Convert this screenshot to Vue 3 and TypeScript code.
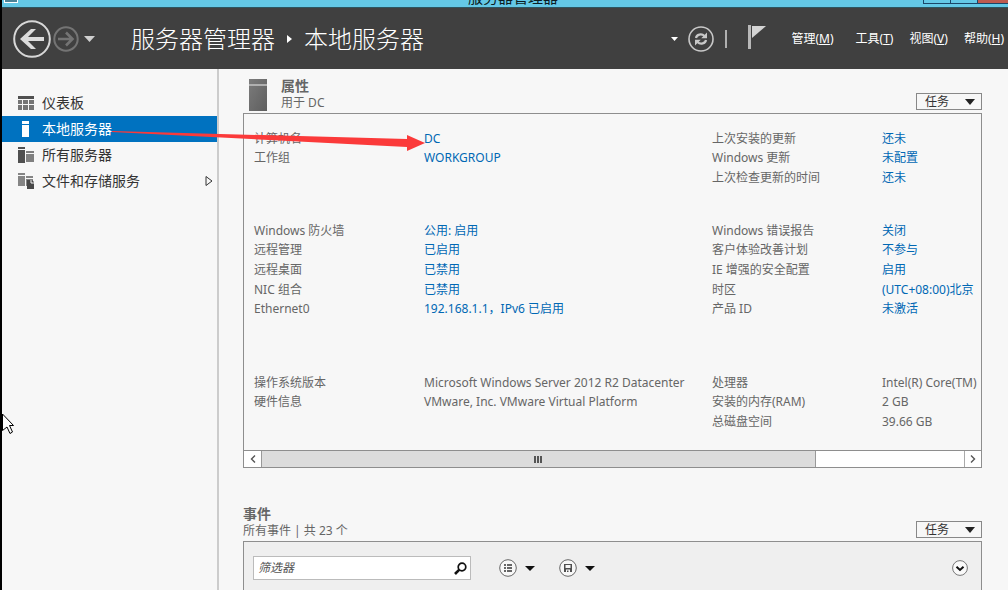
<script setup lang="ts">
import { ref } from 'vue'

interface Fact {
  label: string
  value: string
  link?: boolean
}

interface FactGroup {
  size: 'short' | 'tall'
  columns: Fact[][]
}

const navItems = [
  { id: 'dashboard', label: '仪表板' },
  { id: 'local', label: '本地服务器' },
  { id: 'all', label: '所有服务器' },
  { id: 'storage', label: '文件和存储服务' },
]

const menus = [
  { label: '管理', key: 'M' },
  { label: '工具', key: 'T' },
  { label: '视图', key: 'V' },
  { label: '帮助', key: 'H' },
]

const groups: FactGroup[] = [
  {
    size: 'short',
    columns: [
      [
        { label: '计算机名', value: 'DC', link: true },
        { label: '工作组', value: 'WORKGROUP', link: true },
      ],
      [
        { label: '上次安装的更新', value: '还未', link: true },
        { label: 'Windows 更新', value: '未配置', link: true },
        { label: '上次检查更新的时间', value: '还未', link: true },
      ],
    ],
  },
  {
    size: 'tall',
    columns: [
      [
        { label: 'Windows 防火墙', value: '公用: 启用', link: true },
        { label: '远程管理', value: '已启用', link: true },
        { label: '远程桌面', value: '已禁用', link: true },
        { label: 'NIC 组合', value: '已禁用', link: true },
        { label: 'Ethernet0', value: '192.168.1.1，IPv6 已启用', link: true },
      ],
      [
        { label: 'Windows 错误报告', value: '关闭', link: true },
        { label: '客户体验改善计划', value: '不参与', link: true },
        { label: 'IE 增强的安全配置', value: '启用', link: true },
        { label: '时区', value: '(UTC+08:00)北京', link: true },
        { label: '产品 ID', value: '未激活', link: true },
      ],
    ],
  },
  {
    size: 'short',
    columns: [
      [
        { label: '操作系统版本', value: 'Microsoft Windows Server 2012 R2 Datacenter' },
        { label: '硬件信息', value: 'VMware, Inc. VMware Virtual Platform' },
      ],
      [
        { label: '处理器', value: 'Intel(R) Core(TM)' },
        { label: '安装的内存(RAM)', value: '2 GB' },
        { label: '总磁盘空间', value: '39.66 GB' },
      ],
    ],
  },
]

const active = ref('local')
const filter = ref('')
</script>

<template>
  <div class="window">
    <div class="titlebar">
      <span class="app-icon"></span>
      <span class="window-title">服务器管理器</span>
      <div class="window-buttons">
        <button type="button" aria-label="最小化"></button>
        <button type="button" aria-label="最大化"></button>
        <button type="button" class="close" aria-label="关闭"></button>
      </div>
    </div>

    <header class="toolbar">
      <button type="button" class="bare" aria-label="后退">
        <svg width="38" height="38" viewBox="0 0 38 38">
          <circle cx="19" cy="19" r="17.8" fill="none" stroke="#d8d8d8" stroke-width="2" />
          <path d="M7 19 L18 9 H23 L15 17 H31 V21 H15 L23 29 H18 Z" fill="#dcdcdc" />
        </svg>
      </button>
      <button type="button" class="bare forward" aria-label="前进">
        <svg width="26" height="26" viewBox="0 0 26 26">
          <circle cx="13" cy="13" r="11.7" fill="none" stroke="#747474" stroke-width="2" />
          <path d="M5 13 H19 M13 6.5 L19.5 13 L13 19.5" fill="none" stroke="#747474" stroke-width="2.6" />
        </svg>
      </button>
      <button type="button" class="bare history" aria-label="历史记录">
        <svg width="11" height="6" viewBox="0 0 11 6"><path d="M0 0 H11 L5.5 6 Z" fill="#cfcfcf" /></svg>
      </button>
      <h1 class="crumbs">
        <span>服务器管理器</span>
        <svg width="5" height="8" viewBox="0 0 5 8"><path d="M0 0 L5 4 L0 8 Z" fill="#fff" /></svg>
        <span>本地服务器</span>
      </h1>
      <button type="button" class="bare" aria-label="更多">
        <svg width="7" height="4" viewBox="0 0 7 4"><path d="M0 0 H7 L3.5 4 Z" fill="#fff" /></svg>
      </button>
      <button type="button" class="bare refresh" aria-label="刷新">
        <svg width="26" height="26" viewBox="0 0 26 26">
          <circle cx="13" cy="13" r="12" fill="none" stroke="#c8c8c8" stroke-width="1.6" />
          <path d="M8 12 C8.5 8.5 13.5 7 16.5 10 M18 14 C17.5 17.5 12.5 19 9.5 16" fill="none" stroke="#c8c8c8" stroke-width="2.2" />
          <path d="M19 6.5 V12.2 H13.2 Z M7 19.5 V13.8 H12.8 Z" fill="#c8c8c8" />
        </svg>
      </button>
      <span class="divider"></span>
      <button type="button" class="bare flag" aria-label="通知">
        <svg width="18" height="24" viewBox="0 0 18 24">
          <path d="M0 0 H3 V24 H0 Z" fill="#b8b8b8" />
          <path d="M4 1 H18 L4 13 Z" fill="#d4d4d4" />
        </svg>
      </button>
      <nav class="menus">
        <button v-for="menu in menus" :key="menu.key" type="button">{{ menu.label }}(<u>{{ menu.key }}</u>)</button>
      </nav>
    </header>

    <div class="body">
      <nav class="sidebar">
        <button
          v-for="item in navItems"
          :key="item.id"
          type="button"
          :class="['nav-item', { active: active === item.id }]"
          @click="active = item.id"
        >
          <svg width="16" height="16" viewBox="0 0 16 16">
            <template v-if="item.id === 'dashboard'">
              <path d="M0 1 H16 V4 H0 Z" fill="#505050" />
              <path d="M0 5 H4 V9 H0 Z M0 10 H4 V15 H0 Z M5 5 H10 V9 H5 Z M5 10 H10 V15 H5 Z M11 5 H16 V9 H11 Z M11 10 H16 V15 H11 Z" fill="#757575" />
            </template>
            <template v-else-if="item.id === 'local'">
              <path d="M4 0 H11 V3 H4 Z M4 4 H11 V16 H4 Z" fill="#fff" />
            </template>
            <template v-else-if="item.id === 'all'">
              <path d="M0 0 H7 V2 H0 Z M0 3 H7 V16 H0 Z" fill="#505050" />
              <path d="M8 4 H16 V6 H8 Z M8 7 H16 V15 H8 Z" fill="#808080" />
            </template>
            <template v-else>
              <path d="M0 0 H7 V2 H0 Z M0 3 H7 V13 H0 Z M8 3 H15 V5 H8 Z M8 6 H15 V13 H8 Z" fill="#858585" />
              <path d="M9 7 H14 L16 9 V16 H9 Z" fill="#484848" />
              <path d="M13 7 V10 H16" fill="none" stroke="#f7f7f7" />
            </template>
          </svg>
          <span>{{ item.label }}</span>
          <svg v-if="item.id === 'storage'" class="expand" width="8" height="10" viewBox="0 0 8 10">
            <path d="M1 0.5 L7 5 L1 9.5 Z" fill="none" stroke="#333" />
          </svg>
        </button>
      </nav>

      <main class="content">
        <section>
          <div class="heading">
            <svg class="server" width="18" height="32" viewBox="0 0 18 32">
              <defs>
                <linearGradient id="server-face" x1="0" y1="0" x2="1" y2="1">
                  <stop offset="0" stop-color="#7c7c7c" />
                  <stop offset="1" stop-color="#5e5e5e" />
                </linearGradient>
              </defs>
              <path d="M0 0 H18 V32 H0 Z" fill="url(#server-face)" />
              <path d="M0 5 H18 V7 H0 Z" fill="#b0b0b0" />
            </svg>
            <div class="heading-text">
              <h2>属性</h2>
              <p>用于 DC</p>
            </div>
            <button type="button" class="tasks">
              任务
              <svg width="10" height="6" viewBox="0 0 10 6"><path d="M0 0 H10 L5 6 Z" fill="#222" /></svg>
            </button>
          </div>

          <div class="panel">
            <div class="facts">
              <div v-for="(group, g) in groups" :key="g" :class="['group', group.size]">
                <dl v-for="(column, c) in group.columns" :key="c">
                  <template v-for="fact in column" :key="fact.label">
                    <dt>{{ fact.label }}</dt>
                    <dd>
                      <a v-if="fact.link" href="#">{{ fact.value }}</a>
                      <template v-else>{{ fact.value }}</template>
                    </dd>
                  </template>
                </dl>
              </div>
            </div>
            <div class="scrollbar">
              <button type="button" aria-label="向左滚动">
                <svg width="6" height="8" viewBox="0 0 6 8"><path d="M5 0.5 L1.5 4 L5 7.5" fill="none" stroke="#555" stroke-width="1.4" /></svg>
              </button>
              <div class="track">
                <div class="thumb">
                  <svg width="9" height="7" viewBox="0 0 9 7"><path d="M0 0 H2 V7 H0 Z M3 0 H5 V7 H3 Z M6 0 H8 V7 H6 Z" fill="#555" /></svg>
                </div>
              </div>
              <button type="button" class="right" aria-label="向右滚动">
                <svg width="6" height="8" viewBox="0 0 6 8"><path d="M1 0.5 L4.5 4 L1 7.5" fill="none" stroke="#555" stroke-width="1.4" /></svg>
              </button>
            </div>
          </div>
        </section>

        <section class="events">
          <div class="heading">
            <div class="heading-text">
              <h2>事件</h2>
              <p>所有事件 | 共 23 个</p>
            </div>
            <button type="button" class="tasks">
              任务
              <svg width="10" height="6" viewBox="0 0 10 6"><path d="M0 0 H10 L5 6 Z" fill="#222" /></svg>
            </button>
          </div>

          <div class="panel filter-panel">
            <div class="search">
              <input v-model="filter" type="text" placeholder="筛选器" aria-label="筛选器" />
              <button type="button" class="bare" aria-label="搜索">
                <svg width="13" height="13" viewBox="0 0 13 13">
                  <circle cx="8" cy="5" r="3.8" fill="none" stroke="#111" stroke-width="1.7" />
                  <path d="M5.3 7.7 L1 12" stroke="#111" stroke-width="2.6" />
                </svg>
              </button>
            </div>
            <button type="button" class="bare tool" aria-label="查询条件">
              <svg width="18" height="18" viewBox="0 0 18 18">
                <circle cx="9" cy="9" r="8.3" fill="#f7f7f7" stroke="#666" />
                <path d="M5 5 H7 V7 H5 Z M5 8 H7 V10 H5 Z M5 11 H7 V13 H5 Z M8 5 H13 V7 H8 Z M8 8 H13 V10 H8 Z M8 11 H13 V13 H8 Z" fill="#666" />
              </svg>
              <svg width="10" height="5" viewBox="0 0 10 5"><path d="M0 0 H10 L5 5 Z" fill="#111" /></svg>
            </button>
            <button type="button" class="bare tool" aria-label="保存查询">
              <svg width="18" height="18" viewBox="0 0 18 18">
                <circle cx="9" cy="9" r="8.3" fill="#f7f7f7" stroke="#666" />
                <path d="M5 5 H13 V13 H5 Z M6.5 6 V9 H11.5 V6 Z M7 10.5 V13 H8 V11.5 H9.5 V13 H11 V10.5 Z" fill="#505050" fill-rule="evenodd" />
              </svg>
              <svg width="10" height="5" viewBox="0 0 10 5"><path d="M0 0 H10 L5 5 Z" fill="#111" /></svg>
            </button>
            <button type="button" class="bare unfold" aria-label="展开">
              <svg width="16" height="16" viewBox="0 0 16 16">
                <circle cx="8" cy="8" r="7.4" fill="#fafafa" stroke="#777" />
                <path d="M4.5 6.8 L8 10 L11.5 6.8" fill="none" stroke="#111" stroke-width="2" />
              </svg>
            </button>
          </div>
        </section>
      </main>
    </div>

    <svg class="callout" width="314" height="20" viewBox="0 0 314 20">
      <path d="M0 0 L295 8 V4 L313 12 L295 20 V16 L0 1 Z" fill="#fb3a3a" />
    </svg>
    <svg class="pointer" width="13" height="23" viewBox="0 0 13 23">
      <path d="M0.5 1 L11.5 12.5 H7.5 L10.5 19 L8 20.5 L5 14 L0.5 17.5 Z" fill="#fff" stroke="#000" />
    </svg>
  </div>
</template>

<style>
body {
  margin: 0;
  background: #f7f7f7;
}
</style>

<style scoped>
.window {
  position: relative;
  box-sizing: border-box;
  display: flex;
  flex-direction: column;
  height: 100vh;
  overflow: hidden;
  border-left: 2px solid #000;
  background: #f7f7f7;
  color: #666;
  font: 12px/16px "Noto Sans", "Noto Sans CJK SC", sans-serif;
}

button {
  padding: 0;
  border: 0;
  background: none;
  color: inherit;
  font: inherit;
}

svg {
  display: block;
  flex: none;
}

h1,
h2,
p,
dl,
dd {
  margin: 0;
}

.titlebar {
  display: grid;
  grid-template-columns: 1fr auto 1fr;
  grid-template-rows: 7px;
  align-items: end;
  flex: none;
  height: 7px;
  overflow: hidden;
  background: #64c8e6;
}

.app-icon {
  align-self: start;
  width: 12px;
  height: 2px;
  margin-left: 2px;
  border: 1px solid #fff;
  border-top: 0;
  background: #4b8398;
}

.window-title {
  margin-left: 16px;
  padding-bottom: 2px;
  color: #0b1c22;
  font-size: 15px;
  line-height: 16px;
}

.window-buttons {
  display: flex;
  align-self: start;
  justify-self: end;
}

.window-buttons button {
  box-sizing: border-box;
  width: 27px;
  height: 4px;
  border: 1px solid #1b4668;
  border-width: 0 0 1px 1px;
}

.window-buttons .close {
  width: 31px;
  background: #bd5b50;
}

.toolbar {
  display: flex;
  align-items: center;
  flex: none;
  box-sizing: border-box;
  height: 62px;
  padding: 0 4px 0 11px;
  border-top: 1px solid #2c5561;
  background: #404040;
  color: #fff;
}

.forward {
  margin-left: 2px;
}

.history {
  margin-left: 5px;
}

.crumbs {
  display: flex;
  align-items: center;
  flex: 1;
  gap: 12px;
  margin-left: 36px;
  font-size: 24px;
  font-weight: 300;
  line-height: 32px;
  white-space: nowrap;
}

.refresh {
  margin-left: 10px;
}

.divider {
  width: 2px;
  height: 18px;
  margin: 0 21px 0 11px;
  background: #b0b0b0;
}

.flag {
  margin-bottom: 4px;
}

.menus {
  display: flex;
  gap: 16px;
  margin-left: 25px;
  white-space: nowrap;
}

.menus button:first-child {
  margin-right: 6px;
}

.body {
  display: flex;
  flex: 1;
  min-height: 0;
}

.sidebar {
  flex: none;
  width: 215px;
  padding-top: 21px;
  border-right: 2px solid #ccc;
}

.nav-item {
  display: flex;
  align-items: center;
  gap: 8px;
  width: 100%;
  height: 26px;
  padding: 0 4px 0 16px;
  color: #333;
  font-size: 14px;
}

.nav-item.active {
  background: #0072c0;
  color: #fff;
}

.expand {
  margin-left: auto;
}

.content {
  display: flex;
  flex-direction: column;
  flex: 1;
  min-width: 0;
  padding: 0 26px 0 24px;
}

.heading {
  display: flex;
  align-items: flex-end;
  box-sizing: border-box;
  height: 44px;
  padding-bottom: 2px;
}

.server {
  margin: 0 14px 0 6px;
}

.heading-text {
  flex: 1;
}

h2 {
  font-size: 14px;
  line-height: 18px;
}

.tasks {
  display: flex;
  align-items: center;
  justify-content: space-between;
  box-sizing: border-box;
  width: 66px;
  height: 17px;
  margin-bottom: 1px;
  padding: 0 6px 0 8px;
  border: 1px solid #888;
  color: #333;
}

.panel {
  border: 1px solid #8e8e8e;
}

.facts {
  display: flex;
  flex-direction: column;
  padding: 15px 0 18px 10px;
  overflow: hidden;
}

.group {
  display: grid;
  grid-template-columns: 458px 1fr;
  white-space: nowrap;
}

.group + .group {
  margin-top: 33px;
}

.group.tall + .group {
  margin-top: 54px;
}

dl {
  display: grid;
  grid-template-columns: 170px 1fr;
  align-items: center;
}

.short dl {
  height: 59px;
  grid-template-rows: repeat(3, 1fr);
}

.tall dl {
  height: 98px;
  grid-template-rows: repeat(5, 1fr);
}

a {
  color: #0068b4;
  text-decoration: none;
}

.scrollbar {
  display: flex;
  height: 16px;
  border-top: 1px solid #8e8e8e;
  background: #fff;
}

.scrollbar button {
  display: grid;
  place-items: center;
  width: 17px;
}

.scrollbar .right {
  border-left: 1px solid #aaa;
}

.track {
  flex: 1;
}

.thumb {
  display: grid;
  place-items: center;
  box-sizing: border-box;
  width: 79%;
  height: 100%;
  border: 1px solid #999;
  border-width: 0 1px;
  background: #dcdcdc;
}

.events {
  display: flex;
  flex-direction: column;
  flex: 1;
  margin-top: 29px;
}

.filter-panel {
  display: flex;
  align-items: flex-start;
  flex: 1;
  padding: 14px 13px 0 9px;
  border-bottom: 0;
  background: #efefef;
}

.search {
  display: flex;
  align-items: center;
  box-sizing: border-box;
  width: 218px;
  height: 24px;
  margin-right: 28px;
  padding: 0 3px 0 4px;
  border: 1px solid #bbb;
  background: #fff;
}

.search input {
  flex: 1;
  min-width: 0;
  padding: 0;
  border: 0;
  outline: 0;
  background: none;
  color: #333;
  font: inherit;
}

.search input::placeholder {
  color: #555;
  font-style: italic;
}

.tool,
.unfold {
  display: flex;
  align-items: center;
  gap: 8px;
  height: 24px;
}

.tool + .tool {
  margin-left: 24px;
}

.unfold {
  margin-left: auto;
}

.callout {
  position: absolute;
  top: 131px;
  left: 110px;
}

.pointer {
  position: absolute;
  top: 413px;
  left: 0;
}
</style>
